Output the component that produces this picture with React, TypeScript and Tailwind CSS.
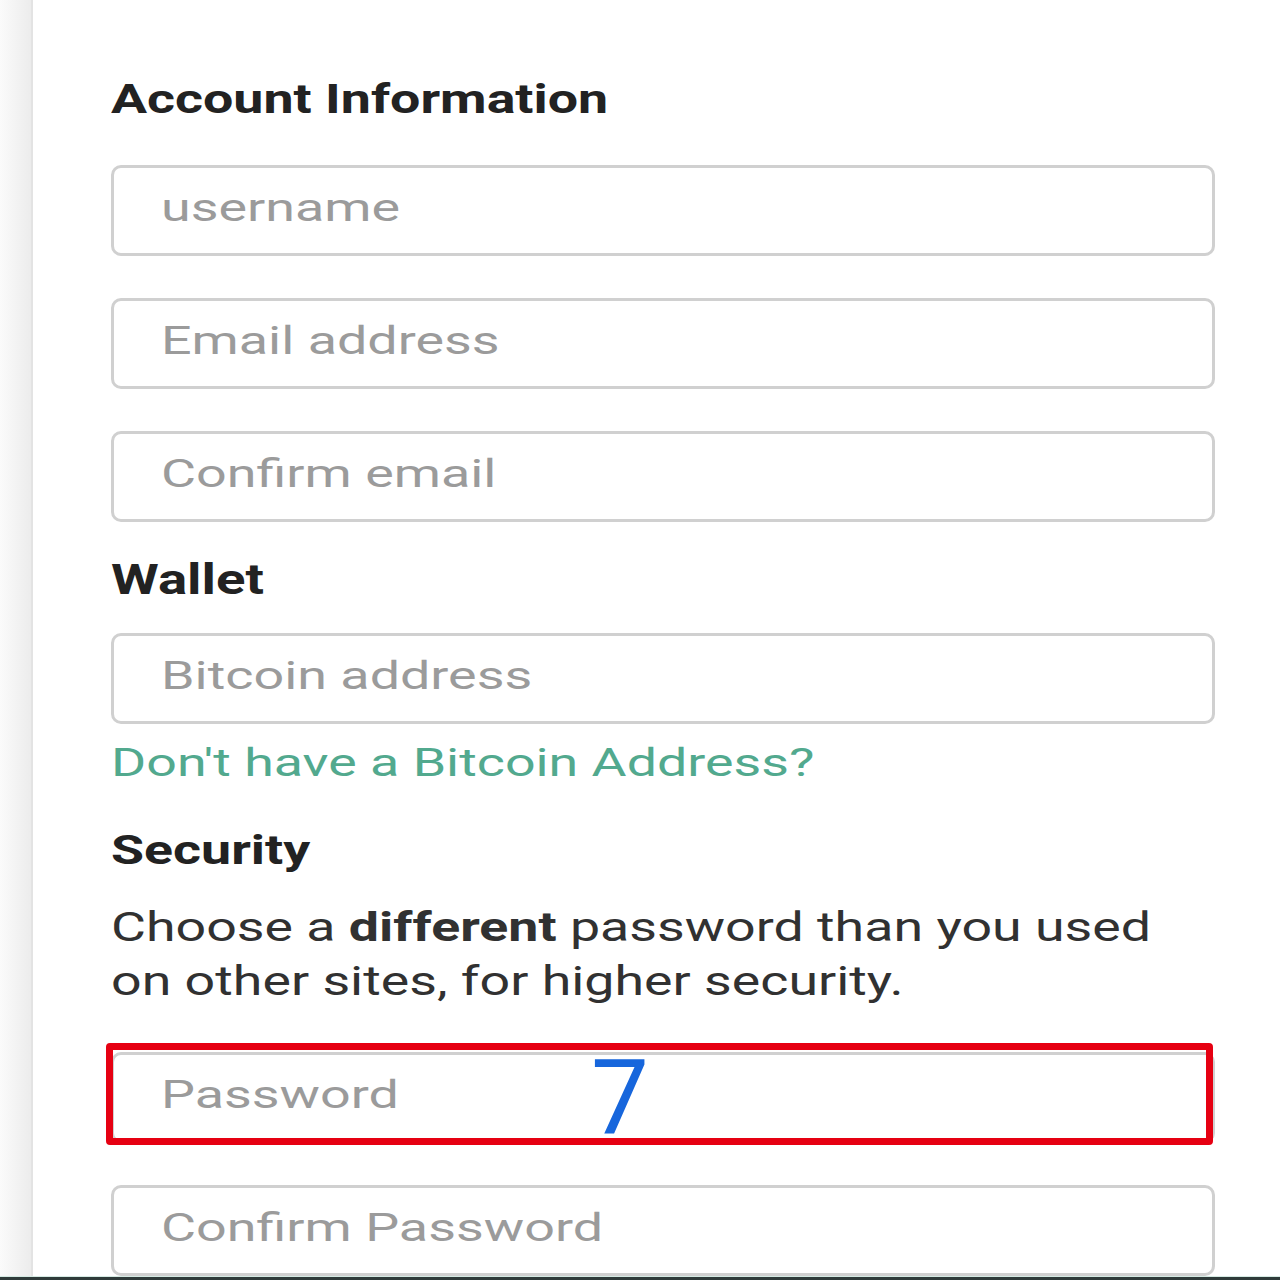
import React from "react";

function Field({ label }: { label: string }) {
  return (
    <div className="h-[91px] w-full shrink-0 rounded-[10px] border-[3px] border-[#d0d0d0] bg-white flex items-center pl-[47px] pb-[5px]">
      <span className="inline-block origin-left scale-x-[1.417] whitespace-nowrap text-[38px] leading-none text-[#9b9b9b] font-['Roboto',sans-serif]">
        {label}
      </span>
    </div>
  );
}

export default function App() {
  return (
    <div className="relative w-[1280px] h-[1280px] overflow-hidden bg-white flex font-['Roboto',sans-serif]">
      <div className="w-[33px] shrink-0 bg-gradient-to-r from-[#fbfbfb] to-[#ececec] border-r-2 border-[#e3e3e3]" />
      <div className="flex-1 min-w-0 pl-[78px] pr-[65px] pt-[75px] flex flex-col">
        <h2 className="h-[48px] leading-[48px] text-[41px] font-bold text-[#222222] whitespace-nowrap">
          <span className="inline-block origin-left scale-x-[1.31]">Account Information</span>
        </h2>
        <div className="mt-[42px] flex flex-col gap-[42px]">
          <Field label="username" />
          <Field label="Email address" />
          <Field label="Confirm email" />
        </div>
        <h2 className="mt-[34px] h-[48px] leading-[48px] text-[42px] font-bold text-[#222222] whitespace-nowrap">
          <span className="inline-block origin-left scale-x-[1.3]">Wallet</span>
        </h2>
        <div className="mt-[29px]">
          <Field label="Bitcoin address" />
        </div>
        <a className="mt-[17px] h-[44px] leading-[44px] text-[38px] text-[#52a98e] whitespace-nowrap">
          <span className="inline-block origin-left scale-x-[1.414]">Don't have a Bitcoin Address?</span>
        </a>
        <h2 className="mt-[41px] h-[48px] leading-[48px] text-[41px] font-bold text-[#222222] whitespace-nowrap">
          <span className="inline-block origin-left scale-x-[1.31]">Security</span>
        </h2>
        <p className="mt-[26px] leading-[54px] text-[41px] text-[#313131] whitespace-nowrap origin-left scale-x-[1.31]">
          Choose a <b className="font-bold">different</b> password than you used
          <br />
          on other sites, for higher security.
        </p>
        <div className="mt-[44px] flex flex-col gap-[42px]">
          <Field label="Password" />
          <Field label="Confirm Password" />
        </div>
      </div>
      <div className="absolute left-0 right-0 bottom-0 h-[4px] border-t border-[#d6ebe4] bg-[#2f3b3a]" />
      <div className="absolute left-[106px] top-[1043px] w-[1107px] h-[102px] border-[7px] border-[#e60012] rounded-[4px]" />
      <div className="absolute left-[591px] top-[1046px] text-[103px] leading-none text-[#1766dc] font-['Roboto',sans-serif]">
        7
      </div>
    </div>
  );
}
